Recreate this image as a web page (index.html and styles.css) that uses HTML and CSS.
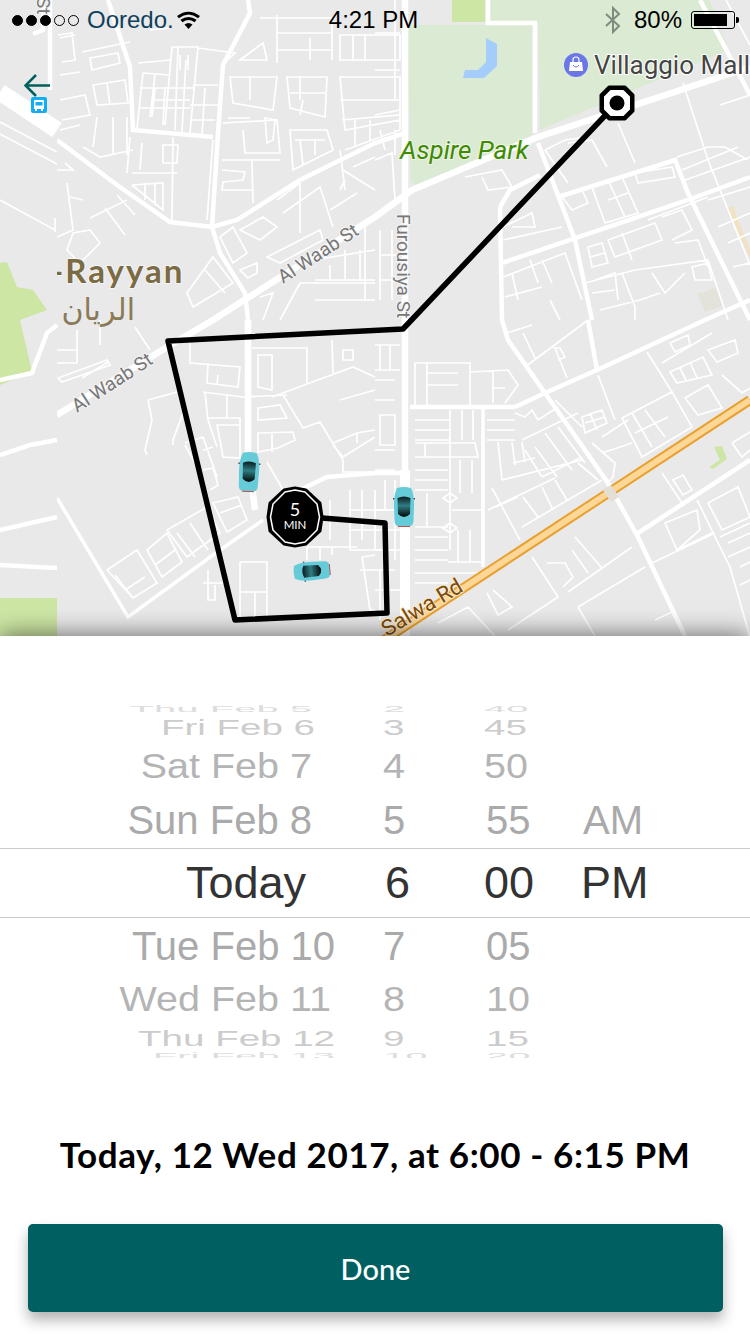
FILE: index.html
```html
<!DOCTYPE html>
<html lang="en">
<head>
  <meta charset="UTF-8" />
  <meta name="viewport" content="width=device-width, initial-scale=1.0"/>
  <title>Schedule a ride</title>
  <link rel="stylesheet" href="styles.css">
</head>
<body>

  <!-- Map -->
  <section class="map">
    <svg class="map-art" width="750" height="636" viewBox="0 0 750 636">
      <defs>
        <linearGradient id="glass" x1="0" y1="0" x2="0" y2="1">
          <stop offset="0" stop-color="#0c1a1c"/>
          <stop offset="0.45" stop-color="#2f7d84"/>
          <stop offset="1" stop-color="#030505"/>
        </linearGradient>
        <g id="car">
          <rect x="-11" y="-9" width="3" height="1.500" fill="#444"/>
          <rect x="8" y="-9" width="3" height="1.500" fill="#444"/>
          <path d="M-6 20 H6 V18 H-6z" fill="#c0504a"/>
          <path d="M-7 -19 Q0 -21 7 -19 Q10.500 -12 10 0 L9.500 14 Q9 19 6 19 L-6 19 Q-9 19 -9.500 14 L-10 0 Q-10.500 -12 -7 -19z" fill="#66cbd8"/>
          <path d="M-6.500 -9 Q0 -12 6.500 -9 L6 7 Q0 13 -6 7z" fill="url(#glass)"/>
        </g>
      </defs>

      <rect width="750" height="636" fill="#e9e9e9"/>

      <!-- parks -->
      <path class="park" d="M408 25H532V135L420 184Q412 186 410 178z"/>
      <path class="park" d="M490 0H710L728 50L540 130L538 23H490z"/>
      <rect class="grass" x="452" y="0" width="33" height="22"/>
      <path class="water" d="M486 38L497 44V66L484 78H463L465 70H478L486 62z"/>
      <path class="grass" d="M714 447L722 446 727 459 713 469 709 467 720 460z"/>
      <path class="sand" d="M727 208L733 206 750 250V258z"/>
      <path fill="#e3e3dc" d="M697 294L717 287 724 306 705 312z"/>

      <!-- small streets -->
      <path class="thin" d="M90 58L118 53 120 63 92 70zM82 52L130 42M93 85L125 80 128 103 97 105zM107 83L110 105M60 38L75 35M172 47H198L190 133M172 47L165 125M138 63L170 60M143 73L137 128M155 75L150 117M143 73L170 75M140 88H195M138 108H190M180 55V70M188 55V70M198 48L235 53 222 65M230 77H277L273 110 233 103zM250 77V100M265 118L275 120 273 140 267 143zM223 123L277 120 280 153 245 153 243 130M228 118H250M222 160H280M252 160L253 203M222 170L245 172 243 180 223 182 222 190H252M97 117L93 147M113 117V155M127 117V155M130 137L127 173M83 147L100 157 133 150M67 183L73 230 57 237M70 197L83 200M57 170H73L65 163M132 185L163 183V210L132 185M145 183V200M155 183V205M173 137L172 220M142 143L140 170M163 145H178L177 163H163zM132 173H177M213 140L207 220M73 233L90 230 100 243 80 263 67 250zM90 218L127 200M105 208L125 235M117 195L135 215M240 230L263 217 277 227 260 240zM220 237L233 227 247 253 233 263zM267 257L320 230 323 240 280 263zM240 270L257 263V273L248 278zM300 183V233M277 200L300 183M283 213L320 187 333 227M330 210L357 193M343 170L375 190M353 167L375 157M313 260L375 250M315 280H375M330 265V280M345 250V280M360 250V280M365 225V300M300 283H375M315 300H375M280 320L300 283M187 293L213 257 233 283 193 307zM205 270L225 293M260 297L273 293 263 320M260 18H335M277 15V63M273 18H332V60M277 33H332M277 50H332M310 38V60M240 60L263 43 267 60zM340 35H400V60H340zM353 35V60M365 35V60M340 77H400V120L345 130zM340 100H400M342 120L400 115V130L345 150M355 120V145M370 120V140M287 77H327L325 117 290 108zM300 77V100M290 93H325M303 100L300 115M290 130H327L333 150 293 170zM295 140H325M300 140L303 165M315 140V155M375 33H400M375 70H400M375 115L400 110M395 0V100M375 160L392 153 395 200M58 35L72 33 75 60 62 62M150 30L170 28M155 88L152 117M165 88L163 125M178 47L175 130M186 60L182 132M155 100H190M190 105H218M193 85H218M205 88L202 135M190 120H215M60 75L80 72M60 100L85 95 90 115 62 120M60 130L80 125M340 190L345 180M392 230V300M380 230V300M380 255H400M380 280H400M340 150L345 190M395 130V155M380 130L385 150"/>
      <path class="thin" d="M190 343V363L240 367 238 387 207 383 208 363M218 375L217 385M203 392L243 397 287 395M205 393L208 420 217 447M227 395V418M207 418H240V458L223 457 217 425H240M258 408L280 405 287 418 258 420zM258 433L293 432 295 440 278 448 258 452zM272 432V452M258 355H272V390L258 387zM252 348H307V383M272 397L353 367 375 377M283 395L303 428 320 422 343 460V472H375M267 462L283 490M333 443L357 433 375 430M333 445L343 457 375 437M357 433V443M332 340L333 373M343 350H353V360H343zM148 400L177 392M148 400L152 420 145 450 147 455M183 413L173 440V445M185 443L203 437 217 477M185 445L195 463M203 450L213 447M203 470L213 468 218 485 210 490M107 570L137 550 157 583 133 598zM115 575L133 598M125 590L145 577M147 550L167 533 182 562 162 577zM155 565L175 550M167 530L207 507 220 533 187 557zM177 533L195 557M190 523L208 550M213 503L238 497 247 520 227 532zM220 513L242 505M240 562H267V617M240 562V617M240 592H267M255 592V617M203 583H227M208 570V600H215V585M307 547H357M307 547V560M320 547V560M332 547V555M362 557L375 555M362 557L370 610H375M57 350H77V363H57M58 378L107 360 110 365 62 382zM82 378L108 362M135 327L150 350M77 330V350M100 320V345M330 500V540M350 490V550M362 490V540M350 510H400M350 530H400M350 550H400M375 490V550M395 480V560M375 345H400M375 370H400M380 345V370M390 345V370M340 400L375 390M380 415H395V445H380zM375 450H395M375 470H395M385 480V510M360 570H395M380 570V620M375 590H400"/>
      <path class="thin" d="M545 150L565 140 588 137M545 150L568 183M568 143L592 140 607 167M562 197L582 190 588 203 572 210zM592 187L622 177 638 213 605 223zM608 180L625 217M608 200L628 193M635 173L672 167 675 177 638 183zM618 123L635 163M683 83L708 160 750 265M677 157L708 147 725 147 748 160M682 170L738 147M685 180L750 157M708 200L750 187M718 227L750 213M728 243L750 233M733 267L750 263M608 240L655 223 662 240 615 257zM622 233L632 260M648 220L708 197M662 217L682 210 692 230 672 240M675 243L698 240 708 267M588 247L602 243 608 263 592 267zM590 257L605 253M503 277L565 253 582 300M512 273L518 300M505 297L542 287M542 260L552 283M585 283L635 270 708 260 728 320M595 280L615 273 618 300M592 293L615 290M622 273L635 307V320M652 273L665 293 685 273M692 267L708 263 712 280 695 280zM503 240L562 227M503 227L532 213 535 227H512M465 177L502 170 512 187 488 190 482 177M726 0L750 45M720 105L750 95M530 260L538 283M550 300L560 320M640 300L660 293M600 310L640 300"/>
      <path class="thin" d="M415 363H470V407H415zM427 363V407M427 373H458M427 385H458M470 372L508 370 518 385 505 403M493 370V403M493 388H505M415 420H450M415 430H450M415 440H450M450 410V550M462 410V440M473 410V440M487 420H515M487 430H515M487 440H515M415 443H475L478 457H415M425 443V457M415 470H448M415 480H448M415 490H448M460 460V493M472 460V493M415 527H448M415 537H448M415 550H448M415 560H448M415 573H448M415 583H448M458 530V562M470 530V562M448 562H483M445 573H483M427 493V527M452 510H483M450 493L457 498 450 503 443 498zM450 523L457 528 450 533 443 528zM498 442L502 480M512 442L515 465M522 442L525 462M502 480L582 460M513 463L535 458M492 488L520 540M495 507L518 497M488 510L555 478M523 497L538 517M542 487L553 510M555 480L567 500M522 527L602 480M578 463L598 480M515 413L525 417 532 410 538 420 558 407M522 440L578 413M525 450L542 477M535 447L557 477M545 433L572 470M558 427L585 463M542 477L582 457M555 400L582 427M555 348L567 378M525 367L588 320M553 348H560L565 357 558 360M523 333L535 358M507 333L532 325M582 417L602 410 607 423 585 433zM590 413L597 430M585 423L605 417M602 437L628 420M592 443L615 463 613 477 607 483M602 453L632 443M598 375L615 420M622 418L672 392 692 427 642 457zM632 413L652 447M645 410L665 437M635 433L668 417M647 352L672 392M662 363L712 333M670 372L703 357 712 375 677 383zM680 368L686 380M690 362L697 378M685 398L708 385 722 408 698 415zM722 375L742 393 750 388M670 343L688 335 690 345 675 352zM708 350L735 340 738 353 717 362zM732 443L750 432M750 450L742 457 732 443M662 473L682 503M673 480L683 475 692 490 683 495zM697 500L730 567 750 637M708 503L738 487 750 517 722 530zM720 537L750 523M728 543L750 533M728 557L750 547M740 567L750 562M740 585L750 580M665 523L697 510 700 530 677 550zM677 550L712 533M652 563L715 533M575 537L602 568M632 547L568 592M547 563H565L573 577 563 587M572 550L588 573M578 607L645 567M532 557L558 597 508 630M493 590L512 607 498 615 487 593M438 623L468 607 495 636M655 620L672 612M578 607L595 636M375 550H395M375 510H395M375 400H395M375 380H395"/>

      <!-- bigger roads -->
      <path class="mid" d="M248 0L250 13 223 65 218 133 212 227 220 253 245 293 248 320M108 0L130 67 133 130 213 137M538 143L575 240 592 320M500 207L502 320 508 340 545 393 608 483 638 537 685 636M500 207L510 190 540 175M558 197L675 160 688 193 750 320M502 263L688 200 750 177M515 407L545 393 597 370 705 320 750 300M410 407H515M588 320L597 370M638 533L750 460M488 0V23H535V133M700 0L750 95M57 140L117 185 170 222 212 227 237 220 300 180 375 143 405 133M300 490L327 477 375 473 400 473"/>
      <path class="fine" d="M483 407V567M57 498L128 617 213 555 263 520"/>
      <path class="main" d="M405 0V470M57 415L167 347 213 320 375 217 412 190 538 137 750 67M248 320V453L255 510"/>
      <path class="wide" d="M405 470V636"/>

      <!-- highway -->
      <path class="hw-edge" d="M378 644L750 400"/>
      <path class="hw-fill" d="M378 644L750 400"/>
      <path d="M603 490L611 485 619 497 611 502z" fill="#e3dfd6"/>

      <text class="town" x="51" y="283">-Rayyan</text>

      <!-- left strip, a coarser tile -->
      <rect width="57" height="636" fill="#e9e9e9"/>
      <path class="grass" d="M0 263L7 262 17 287 33 290 47 310 20 320 32 372 0 385z"/>
      <rect class="grass" x="0" y="598" width="57" height="38"/>
      <path class="wide-band" d="M0 92L57 130"/>
      <path class="mid" d="M43 0V30L33 34M50 0V90M0 380L32 373 47 333 57 325M0 455L30 445 57 440M0 530L57 517M0 565L57 568"/>
      <path class="thin" d="M0 122L57 152M0 134L57 164M0 200L55 230M55 218V232"/>

      <!-- labels -->
      <text class="town-ar" x="135" y="320" direction="rtl">الريان</text>
      <text class="park-name" x="400" y="159">Aspire Park</text>
      <circle cx="576" cy="65" r="12" fill="#6b77e8"/>
      <path d="M570 62H582L583 71H569z" fill="#fff"/>
      <path d="M573 62V60A3 3 0 0 1 579 60V62" fill="none" stroke="#fff" stroke-width="1.200"/>
      <path d="M573 65Q576 69 579 65" fill="none" stroke="#6b77e8"/>
      <text class="poi" x="594" y="74">Villaggio Mall</text>
      <text class="road-name" transform="translate(283 284) rotate(-33)">Al Waab St</text>
      <text class="road-name" transform="translate(77 413) rotate(-33)">Al Waab St</text>
      <text class="road-name" transform="translate(397 214) rotate(90)">Furousiya St</text>
      <text class="road-name" transform="translate(37 -3) rotate(90)">St</text>
      <text class="hw-name" transform="translate(387 637) rotate(-31)">Salwa Rd</text>

      <!-- route -->
      <path class="route" d="M617 103L403 329 168 341 235 620 387 613 385 523 322 518"/>
      <path d="M609 87H625L633 95V111L625 119H609L601 111V95z" fill="#000" stroke="#000" stroke-width="3" stroke-linejoin="round"/>
      <path d="M611 91H623L629 97V109L623 115H611L605 109V97z" fill="#fff" stroke="#fff" stroke-width="2" stroke-linejoin="round"/>
      <circle cx="617" cy="103" r="7.500" fill="#000"/>

      <use href="#car" transform="translate(249 472) rotate(3)"/>
      <use href="#car" transform="translate(404 507)"/>
      <use href="#car" transform="translate(312 571) rotate(-95) scale(.92)"/>

      <!-- pickup marker -->
      <path d="M284 490L295 488 306 490 320 503 322 517 320 531 306 544 295 546 284 544 270 531 268 517 270 503z" fill="#000" stroke="#000" stroke-linejoin="round" stroke-width="3"/>
      <path d="M285 492L295 490 305 492 317 504 319.500 517 317 530 305 542 295 544 285 542 273 530 270.500 517 273 504z" fill="none" stroke="#fff" stroke-width="1.500" stroke-linejoin="round"/>
      <text class="eta-num" x="295" y="516" text-anchor="middle">5</text>
      <text class="eta-unit" x="295" y="529" text-anchor="middle">MIN</text>
    </svg>

    <!-- Status bar -->
    <div class="status">
      <div class="status-left">
        <span class="signal"><i class="on"></i><i class="on"></i><i class="on"></i><i></i><i></i></span>
        <span class="carrier">Ooredo.</span>
        <svg width="23" height="18" viewBox="0 0 23 18"><path d="M11.500 18L7.500 13.500Q11.500 10.500 15.500 13.500zM5.500 11.200L3.400 8.800Q11.500 3 19.600 8.800L17.500 11.200Q11.500 7 5.500 11.200zM1.900 7.200L0 5Q11.500 -3.500 23 5L21.100 7.200Q11.500 0 1.900 7.200z" fill="#000"/></svg>
      </div>
      <div class="clock">4:21 PM</div>
      <div class="status-right">
        <svg width="16" height="28" viewBox="0 0 16 28"><path d="M1 8L14 20 8 26V2L14 8 1 20" fill="none" stroke="#7d8c7f" stroke-width="2"/></svg>
        <span class="battery-text">80%</span>
        <span class="battery"><b></b></span>
      </div>
    </div>

    <a class="back" href="#">
      <svg width="26" height="24" viewBox="0 0 26 24"><path d="M26 11.500H2M12 1L1.500 11.500 12 22" fill="none" stroke="#00605f" stroke-width="2.500"/></svg>
    </a>
    <span class="bus">
      <svg width="16" height="17" viewBox="0 0 16 17"><rect width="16" height="16" rx="2" fill="#12aef5"/><path d="M4 3H12Q13 3 13 4V12H3V4Q3 3 4 3z" fill="#fff"/><rect x="4.500" y="5" width="7" height="3.500" fill="#12aef5"/><rect x="4" y="12" width="2" height="2" fill="#fff"/><rect x="10" y="12" width="2" height="2" fill="#fff"/></svg>
    </span>
  </section>

  <!-- Date and time sheet -->
  <section class="sheet">
    <div class="picker">
      <div class="row h-10 squash-1"><span class="day one">Thu Feb 5</span><span>2</span><span>40</span><span></span></div>
      <div class="row h-25 squash-2"><span class="day fri">Fri Feb 6</span><span>3</span><span>45</span><span></span></div>
      <div class="row h-55 squash-3"><span class="day one">Sat Feb 7</span><span>4</span><span>50</span><span></span></div>
      <div class="row h-54"><span class="day one">Sun Feb 8</span><span>5</span><span class="nudge">55</span><span class="nudge">AM</span></div>
      <div class="row selected"><span class="day today">Today</span><span class="nudge">6</span><span>00</span><span>PM</span></div>
      <div class="row h-56"><span class="day">Tue Feb 10</span><span>7</span><span class="nudge">05</span><span></span></div>
      <div class="row h-50 squash-3"><span class="day wed">Wed Feb 11</span><span>8</span><span class="nudge">10</span><span></span></div>
      <div class="row h-28 squash-2"><span class="day">Thu Feb 12</span><span>9</span><span class="nudge">15</span><span></span></div>
      <div class="row h-8 squash-1"><span class="day">Fri Feb 13</span><span>10</span><span class="nudge">20</span><span></span></div>
    </div>

    <p class="summary">Today, 12 Wed 2017, at 6:00 - 6:15 PM</p>
    <button class="done" type="button">Done</button>
  </section>

</body>
</html>
```

FILE: styles.css
```css
* { box-sizing: border-box; margin: 0; padding: 0; }
body { width: 750px; height: 1334px; overflow: hidden; background: #fff; font-family: "Liberation Sans", Arial, sans-serif; }

/* Map */
.map { position: relative; height: 636px; overflow: hidden; }
.map-art { display: block; }
.park { fill: #dbead3; }
.grass { fill: #cde6a4; }
.water { fill: #a4cdfb; }
.sand { fill: #f2e2c4; }
.thin, .fine, .mid, .main, .wide, .wide-band, .hw-edge, .hw-fill, .route { fill: none; }
.thin { stroke: #fff; stroke-width: 1.7; }
.fine { stroke: #fff; stroke-width: 3.5; }
.mid { stroke: #fff; stroke-width: 4.5; }
.main { stroke: #fff; stroke-width: 6.5; }
.wide { stroke: #fff; stroke-width: 10; }
.wide-band { stroke: #fff; stroke-width: 17; }
.hw-edge { stroke: #e8a02e; stroke-width: 10; }
.hw-fill { stroke: #fdd798; stroke-width: 6; }
.route { stroke: #000; stroke-width: 5.5; stroke-linejoin: round; stroke-linecap: round; }

.town { font: 700 33px Lato, sans-serif; letter-spacing: 2px; fill: #7b6b45; paint-order: stroke; stroke: #f4f4f4; stroke-width: 2px; }
.town-ar { font: 30px "DejaVu Sans", sans-serif; fill: #8a7a58; }
.park-name { font: italic 26px Roboto, sans-serif; fill: #3f8a00; paint-order: stroke; stroke: #eef5e8; stroke-width: 2px; }
.poi { font: 26px Roboto, sans-serif; fill: #454545; paint-order: stroke; stroke: #fff; stroke-width: 2px; }
.road-name { font: 19px Roboto, sans-serif; fill: #777; paint-order: stroke; stroke: #f4f4f4; stroke-width: 2px; }
.hw-name { font: 22px Roboto, sans-serif; fill: #7a4a10; paint-order: stroke; stroke: #fdecc8; stroke-width: 2px; }
.eta-num { font: 18px Lato, sans-serif; fill: #fff; }
.eta-unit { font: 11.500px Lato, sans-serif; fill: #fff; }

/* Status bar */
.status { position: absolute; top: 0; left: 0; right: 0; height: 40px; display: grid; grid-template-columns: 1fr auto 1fr; align-items: center; padding: 0 15px 0 12px; font-size: 24px; color: #000; }
.status-left { display: flex; align-items: center; }
.signal { display: flex; gap: 3px; margin-right: 8px; }
.signal i { width: 11px; height: 11px; border: 1px solid #000; border-radius: 50%; }
.signal i.on { background: #000; }
.carrier { color: #0f3f5c; margin-right: 3px; }
.status-right { display: flex; align-items: center; justify-content: flex-end; }
.battery-text { margin: 0 9px 0 13px; }
.battery { display: block; width: 44px; height: 18px; border: 1px solid #000; border-radius: 3px; padding: 2px; position: relative; }
.battery b { display: block; width: 33px; height: 12px; background: #000; }
.battery::after { content: ""; position: absolute; right: -5px; top: 5px; width: 3px; height: 6px; background: #000; border-radius: 0 2px 2px 0; }

.back { position: absolute; left: 24px; top: 74px; line-height: 0; }
.bus { position: absolute; left: 31px; top: 97px; line-height: 0; }

/* Sheet */
.sheet { position: relative; height: 698px; background: #fff; box-shadow: 0 0 24px rgba(0, 0, 0, .6); padding-top: 68px; }
.picker { height: 354px; overflow: hidden; }
.row { display: grid; grid-template-columns: 335px 149px 97px 1fr; align-content: center; align-items: center; font-size: 40px; line-height: 46px; color: #aaa; white-space: nowrap; }
.row span:nth-child(2) { margin-left: 48px; }
.day { text-align: right; }
.day.one { padding-right: 23px; }
.day.fri { padding-right: 20px; }
.day.wed { padding-right: 4px; }
.day.today { padding-right: 29px; }
.nudge { margin-left: 2px; }
.row span.nudge:nth-child(2) { margin-left: 50px; }

.h-8 { height: 8px; } .h-10 { height: 10px; } .h-25 { height: 25px; } .h-28 { height: 28px; }
.h-50 { height: 50px; } .h-54 { height: 54px; } .h-55 { height: 55px; } .h-56 { height: 56px; }
.h-54, .h-55 { padding-bottom: 2px; }
.squash-1 span { display: block; transform: scaleY(.22); color: #ddd; }
.squash-2 span { display: block; transform: scaleY(.58); color: #ccc; font-size: 38.500px; }
.squash-3 span { display: block; transform: scaleY(.87); color: #b4b4b4; font-size: 39.500px; }
.selected { height: 70px; border-top: 1px solid #ccc; border-bottom: 1px solid #ccc; color: #333; font-size: 45px; }

.summary { margin-top: 71px; text-align: center; font: 700 35px/50px Lato, sans-serif; letter-spacing: .6px; color: #000; }
.done { display: block; width: 695px; height: 88px; margin: 45px 0 0 28px; border: 0; border-radius: 5px; background: #005f61; color: #fff; font: 500 29px Lato, sans-serif; box-shadow: 0 8px 14px rgba(0, 0, 0, .3); }
```
